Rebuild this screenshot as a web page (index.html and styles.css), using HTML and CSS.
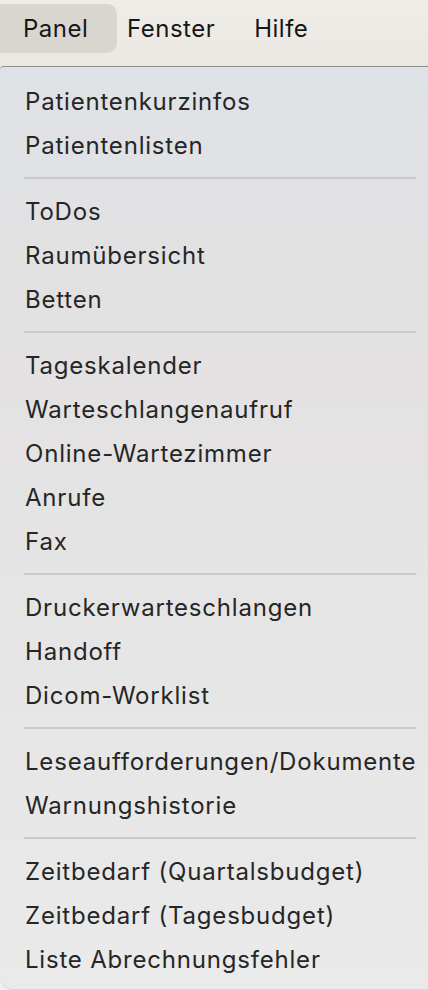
FILE: index.html
```html
<!DOCTYPE html>
<html lang="de">
<head>
<meta charset="utf-8">
<title>Panel-Menü</title>
<link rel="stylesheet" href="styles.css">
</head>
<body>
<div class="screen">
  <nav class="menubar">
    <div class="menubar-item active">Panel</div>
    <div class="menubar-item fenster">Fenster</div>
    <div class="menubar-item hilfe">Hilfe</div>
  </nav>
  <div class="menu">
    <div class="item">Patientenkurzinfos</div>
    <div class="item">Patientenlisten</div>
    <div class="sep"></div>
    <div class="item">ToDos</div>
    <div class="item">Raumübersicht</div>
    <div class="item">Betten</div>
    <div class="sep"></div>
    <div class="item">Tageskalender</div>
    <div class="item">Warteschlangenaufruf</div>
    <div class="item">Online-Wartezimmer</div>
    <div class="item">Anrufe</div>
    <div class="item">Fax</div>
    <div class="sep"></div>
    <div class="item">Druckerwarteschlangen</div>
    <div class="item">Handoff</div>
    <div class="item">Dicom-Worklist</div>
    <div class="sep"></div>
    <div class="item">Leseaufforderungen/Dokumente</div>
    <div class="item">Warnungshistorie</div>
    <div class="sep"></div>
    <div class="item">Zeitbedarf (Quartalsbudget)</div>
    <div class="item">Zeitbedarf (Tagesbudget)</div>
    <div class="item">Liste Abrechnungsfehler</div>
  </div>
</div>
</body>
</html>
```
FILE: styles.css
```css
* { box-sizing: border-box; }
html, body {
  margin: 0;
  padding: 0;
  width: 428px;
  height: 990px;
  overflow: hidden;
  background: #f2f2f2;
  font-family: Inter, "Noto Sans", "Liberation Sans", sans-serif;
}
.screen {
  display: flex;
  flex-direction: column;
  height: 990px;
}
.menubar {
  height: 66px;
  flex: none;
  display: flex;
  align-items: flex-start;
  padding-top: 4px;
  background: linear-gradient(to bottom, #efede8, #ebe8e2);
}
.menubar-item {
  height: 49px;
  display: flex;
  align-items: center;
  font-size: 24px;
  color: #161616;
  letter-spacing: 0.5px;
  white-space: nowrap;
}
.menubar-item.active {
  width: 117px;
  padding-left: 23px;
  background: #d9d6d0;
  border-radius: 0 10px 10px 0;
}
.menubar-item.fenster { margin-left: 10px; }
.menubar-item.hilfe { margin-left: 39px; }
.menu {
  flex: none;
  height: 923px;
  border-top: 1px solid #8e8e8e;
  border-radius: 4px 0 0 14px;
  background: linear-gradient(to bottom, #dfe2e6 0%, #e3e1e1 30%, #e6e5e5 60%, #eaeaea 100%);
  padding: 12px 12px 8px 25px;
  display: flex;
  flex-direction: column;
  box-shadow: 0 1px 2px rgba(0,0,0,0.15);
}
.item {
  height: 44px;
  display: flex;
  align-items: center;
  font-size: 24px;
  color: #262626;
  letter-spacing: 0.8px;
  white-space: nowrap;
}
.sep {
  height: 22px;
  display: flex;
  align-items: center;
  margin-left: -1px;
}
.sep::before {
  content: "";
  display: block;
  width: 392px;
  height: 2px;
  background: #cbcaca;
}
```
